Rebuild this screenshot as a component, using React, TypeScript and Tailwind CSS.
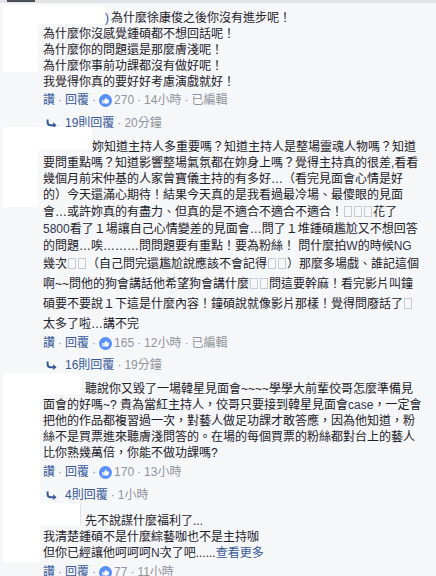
import React from "react";

// colours taken from the old facebook comment styles
const blue = "text-[#365899]";
const gray = "text-[#90949c]";

function Tofu({ n = 1 }: { n?: number }) {
  return (
    <>
      {Array.from({ length: n }).map((_, i) => (
        <span
          key={i}
          className="mx-[1px] inline-block h-[11px] w-[8px] border border-[#c8cbd1] align-[-1px]"
        />
      ))}
    </>
  );
}

function Dot() {
  return <span className={`mx-[3px] ${gray}`}>·</span>;
}

function LikeIcon() {
  return (
    <svg width="13" height="13" viewBox="0 0 16 16" className="mr-[2px] shrink-0">
      <circle cx="8" cy="8" r="8" fill="#5890ff" />
      <path
        d="M4 7.4h1.7v4.4H4zM6.4 11.8V7.5l2-2.8c.3-.4.9-.2.9.3v1.8h2.2c.6 0 1 .5.9 1l-.6 3c-.1.6-.6 1-1.2 1z"
        fill="#fff"
      />
    </svg>
  );
}

function ReplyArrow() {
  return (
    <svg width="11" height="9" viewBox="0 0 11 9" className="ml-[3px] mr-[8px] shrink-0">
      <path d="M1.6 0.5v2.8c0 2 1.2 3 3 3H7.8" fill="none" stroke="#365899" strokeWidth="2" />
      <path d="M7.2 3.2 10.6 6.3 7.2 9z" fill="#365899" />
    </svg>
  );
}

function Meta({ likes, time, edited }: { likes: string; time: string; edited?: boolean }) {
  return (
    <div className="flex h-[20px] items-center whitespace-nowrap">
      <span className={blue}>讚</span>
      <Dot />
      <span className={blue}>回覆</span>
      <Dot />
      <LikeIcon />
      <span className={gray}>{likes}</span>
      <Dot />
      <span className={gray}>{time}</span>
      {edited && (
        <>
          <Dot />
          <span className={gray}>已編輯</span>
        </>
      )}
    </div>
  );
}

function Replies({ count, time }: { count: string; time: string }) {
  return (
    <div className="mt-[2px] flex h-[22px] items-center whitespace-nowrap">
      <ReplyArrow />
      <span className={blue}>{count}則回覆</span>
      <Dot />
      <span className={gray}>{time}</span>
    </div>
  );
}

const latin = "text-[#2f3553]";

export default function App() {
  return (
    <div className="relative h-[576px] w-[436px] overflow-hidden bg-[#f6f7f9] text-[12px] text-[#1d2129] [font-family:'Liberation_Sans','Noto_Sans_CJK_TC',sans-serif]">
      <div className="flex h-[3px] bg-[#e1e3e7]">
        <div className="ml-[7px] h-[2px] w-[28px] bg-[#4b4f56]" />
      </div>

      {/* comment 1 */}
      <div className="pl-[43px] pt-[7px] whitespace-nowrap">
        <p className="h-[16px] leading-[16px]">
          <span className={`ml-[62px] mr-[2px] ${blue}`}>)</span>為什麼徐康俊之後你沒有進步呢！
        </p>
        <p className="h-[16px] leading-[16px]">為什麼你沒感覺鍾碩都不想回話呢！</p>
        <p className="h-[16px] leading-[16px]">為什麼你的問題還是那麼膚淺呢！</p>
        <p className="h-[16px] leading-[16px]">為什麼你事前功課都沒有做好呢！</p>
        <p className="h-[16px] leading-[16px]">我覺得你真的要好好考慮演戲就好！</p>
        <Meta likes="270" time="14小時" edited />
        <Replies count="19" time="20分鐘" />
      </div>

      {/* comment 2 */}
      <div className="mt-[5px] pl-[43px] whitespace-nowrap">
        <p className="h-[16px] leading-[16px] pl-[49px]">妳知道主持人多重要嗎？知道主持人是整場靈魂人物嗎？知道</p>
        <p className="h-[16px] leading-[16px]">要問重點嗎？知道影響整場氣氛都在妳身上嗎？覺得主持真的很差,看看</p>
        <p className="h-[16px] leading-[16px]">幾個月前宋仲基的人家曾寶儀主持的有多好…（看完見面會心情是好</p>
        <p className="h-[17px] leading-[17px]">的）今天還滿心期待！結果今天真的是我看過最冷場、最傻眼的見面</p>
        <p className="h-[16px] leading-[16px]">
          會…或許妳真的有盡力、但真的是不適合不適合不適合！<Tofu n={3} />花了
        </p>
        <p className="h-[18px] leading-[18px]">
          <span className={latin}>5800</span>看了１場讓自己心情變差的見面會…問了１堆鍾碩尷尬又不想回答
        </p>
        <p className="h-[16px] leading-[16px]">
          的問題…唉………問問題要有重點！要為粉絲！ 問什麼拍<span className={latin}>W</span>的時候<span className={latin}>NG</span>
        </p>
        <p className="h-[20px] leading-[20px]">
          幾次<Tofu n={2} />（自己問完還尷尬說應該不會記得<Tofu n={2} />）那麼多場戲、誰記這個
        </p>
        <p className="h-[20px] leading-[20px]">
          啊~~問他的狗會講話他希望狗會講什麼<Tofu n={2} />問這要幹麻！看完影片叫鐘
        </p>
        <p className="h-[20px] leading-[20px]">
          碩要不要說１下這是什麼內容！鐘碩說就像影片那樣！覺得問廢話了<Tofu />
        </p>
        <p className="h-[20px] leading-[20px]">太多了啦…講不完</p>
        <div className="h-[18px] flex items-center">
          <Meta likes="165" time="12小時" edited />
        </div>
        <Replies count="16" time="19分鐘" />
      </div>

      {/* comment 3 */}
      <div className="mt-[5px] pl-[43px] whitespace-nowrap">
        <p className="h-[16px] leading-[16px] pl-[42px]">聽說你又毀了一場韓星見面會~~~~學學大前輩佼哥怎麼準備見</p>
        <p className="h-[16px] leading-[16px]">
          面會的好嗎~? 貴為當紅主持人，佼哥只要接到韓星見面會<span className={latin}>case</span>，一定會
        </p>
        <p className="h-[16px] leading-[16px]">把他的作品都複習過一次，對藝人做足功課才敢答應，因為他知道，粉</p>
        <p className="h-[16px] leading-[16px]">絲不是買票進來聽膚淺問答的。在場的每個買票的粉絲都對台上的藝人</p>
        <p className="h-[16px] leading-[16px]">比你熟幾萬倍，你能不做功課嗎?</p>
        <div className="mt-[1px]">
          <Meta likes="170" time="13小時" />
        </div>
        <Replies count="4" time="1小時" />
      </div>

      {/* comment 4 */}
      <div className="mt-[7px] pl-[43px] whitespace-nowrap">
        <p className="h-[16px] leading-[16px] pl-[42px]">先不說謀什麼福利了...</p>
        <p className="h-[16px] leading-[16px]">我清楚鍾碩不是什麼綜藝咖也不是主持咖</p>
        <p className="h-[16px] leading-[16px]">
          但你已經讓他呵呵呵<span className={latin}>N</span>次了吧......<span className={blue}>查看更多</span>
        </p>
        <div className="mt-[1px]">
          <Meta likes="77" time="11小時" />
        </div>
      </div>

      {/* white blocks that hide avatars and names */}
      <div className="absolute left-[3px] top-[5px] h-[19px] w-[102px] bg-white" />
      <div className="absolute left-[3px] top-[24px] h-[48px] w-[35px] bg-white" />
      <div className="absolute left-[3px] top-[127px] h-[80px] w-[35px] bg-white" />
      <div className="absolute left-[38px] top-[127px] h-[23px] w-[54px] bg-white" />
      <div className="absolute left-[3px] top-[373px] h-[189px] w-[37px] bg-white" />
      <div className="absolute left-[40px] top-[373px] h-[22px] w-[42px] bg-white" />
      <div className="absolute left-[40px] top-[503px] h-[22px] w-[41px] border-r border-[#dfe3ec] bg-white" />
    </div>
  );
}
